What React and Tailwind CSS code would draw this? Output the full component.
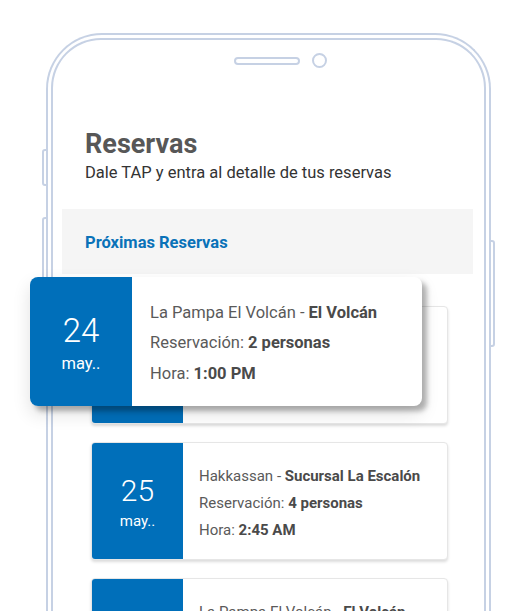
import React from "react";

const font = { fontFamily: "Roboto, 'Noto Sans', Arial, sans-serif" };

function SmallCard({ day, place, branch, people, time }) {
  return (
    <div className="flex h-[118px] w-[357px] ml-[38px] overflow-hidden rounded-[4px] border border-[#e6e6e6] bg-white shadow-[0_2px_3px_rgba(0,0,0,0.14)]">
      <div className="flex w-[91px] shrink-0 flex-col items-center justify-center bg-[#006fba] pt-[4px] text-white">
        <div className="text-[30px] font-light leading-[30px]">{day}</div>
        <div className="mt-[6px] text-[15px] leading-[18px]">may..</div>
      </div>
      <div className="flex flex-col justify-center pl-[16px] pt-[4px] text-[15px] leading-[27px] text-[#5a5a5a]">
        <div>
          {place} - <span className="font-bold text-[#4a4a4a]">{branch}</span>
        </div>
        <div>
          Reservación: <span className="font-bold text-[#4a4a4a]">{people}</span>
        </div>
        <div>
          Hora: <span className="font-bold text-[#4a4a4a]">{time}</span>
        </div>
      </div>
    </div>
  );
}

export default function App() {
  return (
    <div style={font} className="relative h-[611px] w-[528px] overflow-hidden bg-white pt-[33px]">
      <div className="relative ml-[46px] w-[445px]">
        {/* side buttons */}
        <div className="absolute left-[-4px] top-[116px] h-[37px] w-[8px] rounded-[3px] border-2 border-[#c6d1e4]" />
        <div className="absolute left-[-4px] top-[184px] h-[110px] w-[8px] rounded-[3px] border-2 border-[#c6d1e4]" />
        <div className="absolute right-[-4px] top-[207px] h-[107px] w-[8px] rounded-[3px] border-2 border-[#c6d1e4]" />

        <div className="relative h-[640px] rounded-t-[56px] border-[2.5px] border-b-0 border-[#c6d1e4] bg-white px-[3px] pt-[3px]">
          <div className="h-full rounded-t-[50px] border-[2.5px] border-b-0 border-[#c6d1e4] bg-white">
            {/* speaker + camera */}
            <div className="ml-[181px] mt-[13px] flex h-[15px] items-center">
              <div className="h-[8px] w-[66px] rounded-full border-2 border-[#c6d1e4]" />
              <div className="ml-[12px] h-[15px] w-[15px] rounded-full border-2 border-[#c6d1e4]" />
            </div>

            <div className="ml-[32px] mt-[60px] text-[27px] font-bold leading-[32px] text-[#575757]">
              Reservas
            </div>
            <div className="ml-[32px] mt-[3px] text-[16.5px] leading-[20px] text-[#333333]">
              Dale TAP y entra al detalle de tus reservas
            </div>

            <div className="ml-[9px] mt-[26px] h-[65px] w-[411px] bg-[#f5f5f5] pl-[23px] pt-[24px]">
              <div className="text-[16.5px] font-bold leading-[20px] text-[#0a72b8]">
                Próximas Reservas
              </div>
            </div>

            <div className="mt-[32px] flex flex-col gap-[18px]">
              <SmallCard day="24" place="La Pampa El Volcán" branch="El Volcán" people="2 personas" time="1:00 PM" />
              <SmallCard day="25" place="Hakkassan" branch="Sucursal La Escalón" people="4 personas" time="2:45 AM" />
              <SmallCard day="26" place="La Pampa El Volcán" branch="El Volcán" people="3 personas" time="8:30 PM" />
            </div>
          </div>
        </div>
      </div>

      {/* floating highlighted card */}
      <div className="absolute left-[30px] top-[277px] flex h-[129px] w-[392px] overflow-hidden rounded-[8px] bg-white shadow-[5px_5px_5px_rgba(0,0,0,0.28),0_8px_18px_rgba(0,0,0,0.12)]">
        <div className="flex w-[102px] shrink-0 flex-col items-center justify-center bg-[#006fba] pt-[4px] text-white">
          <div className="text-[33px] font-light leading-[33px]">24</div>
          <div className="mt-[7px] text-[16.5px] leading-[20px]">may..</div>
        </div>
        <div className="flex flex-col justify-center pl-[18px] pt-[4px] text-[16.5px] leading-[30.5px] text-[#5a5a5a]">
          <div>
            La Pampa El Volcán - <span className="font-bold text-[#4a4a4a]">El Volcán</span>
          </div>
          <div>
            Reservación: <span className="font-bold text-[#4a4a4a]">2 personas</span>
          </div>
          <div>
            Hora: <span className="font-bold text-[#4a4a4a]">1:00 PM</span>
          </div>
        </div>
      </div>
    </div>
  );
}
